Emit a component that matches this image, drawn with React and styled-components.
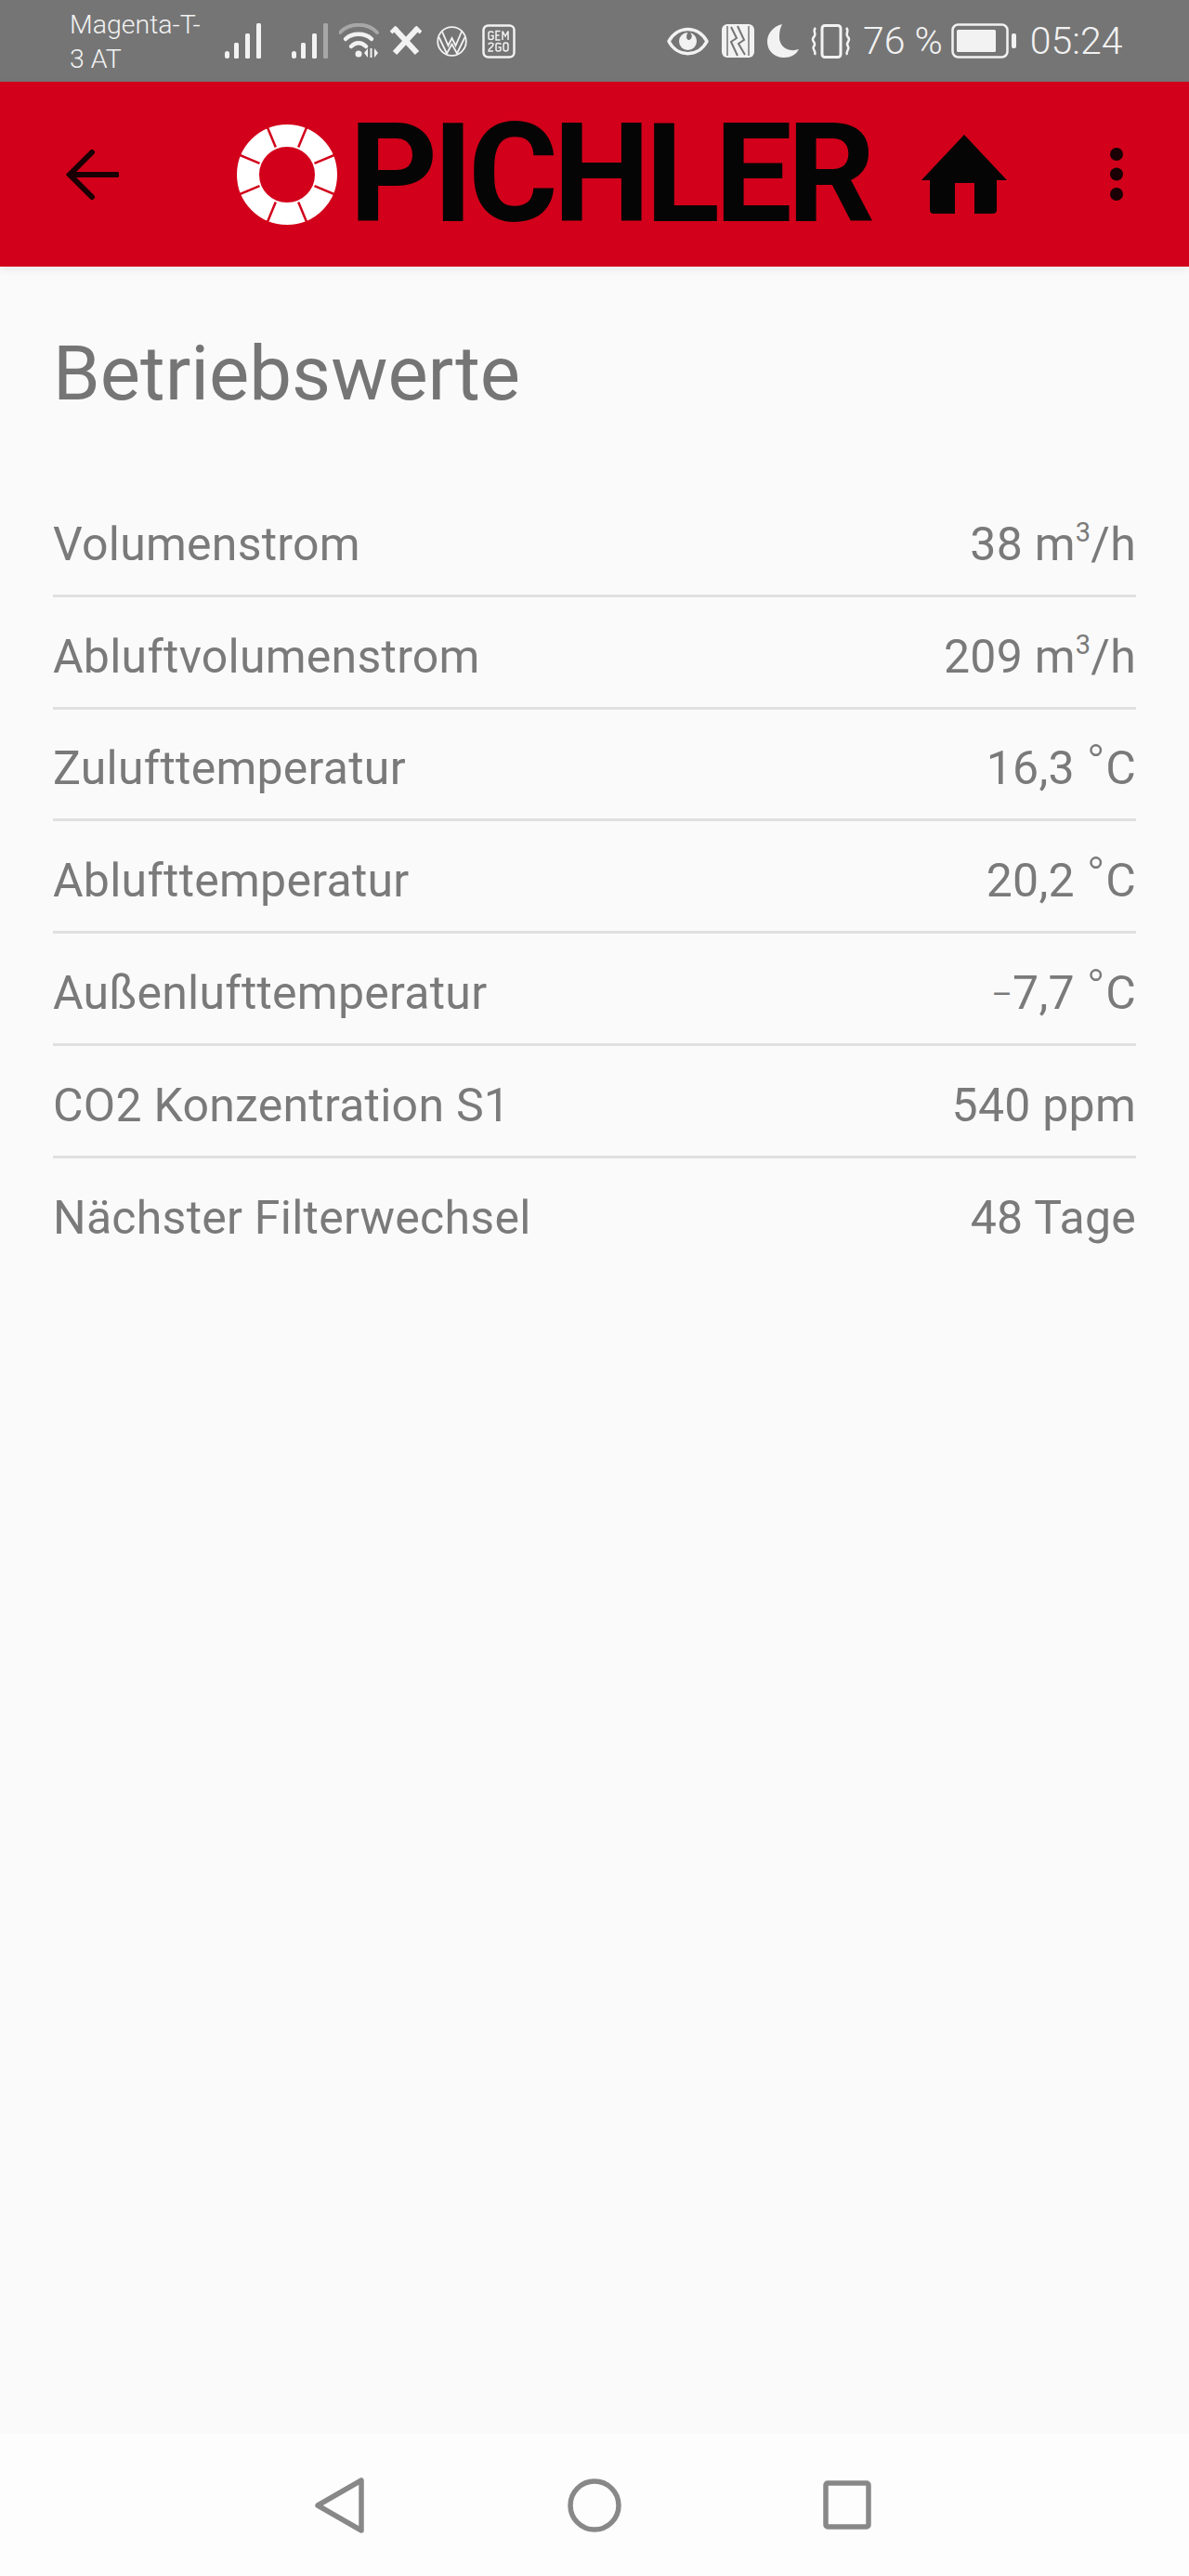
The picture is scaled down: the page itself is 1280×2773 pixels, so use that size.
import styled, { createGlobalStyle } from "styled-components";

const GlobalStyle = createGlobalStyle`
  html, body {
    margin: 0;
    padding: 0;
    background: #fafafa;
  }
  * { box-sizing: border-box; }
`;

const Screen = styled.div`
  width: 1280px;
  height: 2773px;
  display: flex;
  flex-direction: column;
  overflow: hidden;
  font-family: "Roboto", "Liberation Sans", sans-serif;
  background: #fafafa;
`;

const StatusBar = styled.div`
  height: 88px;
  flex: none;
  background: #757575;
  color: #f2f2f2;
  display: flex;
  align-items: center;
  padding-left: 75px;
`;

const Carrier = styled.div`
  width: 167px;
  font-size: 28.5px;
  line-height: 37px;
  font-weight: 300;
  white-space: pre-line;
  margin-top: 2px;
`;

const StatusIcon = styled.svg`
  flex: none;
  display: block;
  margin-left: ${(p) => p.$gap || 0}px;
  color: #f2f2f2;
`;

const StatusText = styled.span`
  font-size: 41px;
  font-weight: 300;
  line-height: 88px;
  flex: none;
  margin-left: ${(p) => p.$gap || 0}px;
`;

const Header = styled.header`
  height: 199px;
  flex: none;
  background: #d2001a;
  display: flex;
  align-items: center;
  padding-left: 71px;
  box-shadow: 0 3px 8px rgba(0, 0, 0, 0.08);
  position: relative;
`;

const HeaderIcon = styled.svg`
  flex: none;
  display: block;
  margin-left: ${(p) => p.$gap || 0}px;
`;

const LogoText = styled.span`
  flex: none;
  width: 563px;
  margin-left: 13px;
  font-size: 148px;
  line-height: 199px;
  font-weight: 700;
  color: #050505;
  letter-spacing: -5.3px;
  white-space: nowrap;
`;

const Content = styled.main`
  flex: 1;
  padding: 0 57px;
`;

const Title = styled.h1`
  margin: 0;
  padding-top: 72px;
  font-size: 81.5px;
  line-height: 86px;
  font-weight: 400;
  color: #757575;
`;

const ValueList = styled.div`
  margin-top: 77px;
  width: 1166px;
`;

const ValueRow = styled.div`
  height: 120.8px;
  padding-top: 10px;
  display: flex;
  justify-content: space-between;
  align-items: center;
  font-size: 50px;
  font-weight: 400;
  letter-spacing: 0.25px;
  color: #7a7a7a;
  border-bottom: 3px solid ${(p) => (p.$last ? "transparent" : "#e0e0e0")};
`;

const Raised = styled.span`
  font-size: ${(p) => p.$size}px;
  line-height: 0;
  vertical-align: ${(p) => p.$lift}px;
  font-weight: ${(p) => p.$weight || 300};
`;

const NavBar = styled.nav`
  height: 153px;
  flex: none;
  background: #fdfdfd;
  display: flex;
  align-items: center;
  padding-left: 339px;
`;

const NavIcon = styled.svg`
  flex: none;
  display: block;
  margin-left: ${(p) => p.$gap || 0}px;
`;

const cube = <Raised $size={29} $lift={20} $weight={400}>3</Raised>;
const degree = <Raised $size={54} $lift={4}>°</Raised>;
const minus = <Raised $size={34} $lift={4} $weight={400}>–</Raised>;

const rows = [
  ["Volumenstrom", <>38 m{cube}/h</>],
  ["Abluftvolumenstrom", <>209 m{cube}/h</>],
  ["Zulufttemperatur", <>16,3 {degree}C</>],
  ["Ablufttemperatur", <>20,2 {degree}C</>],
  ["Außenlufttemperatur", <>{minus}7,7 {degree}C</>],
  ["CO2 Konzentration S1", "540 ppm"],
  ["Nächster Filterwechsel", "48 Tage"],
];

const Signal = ({ gap, dim }) => (
  <StatusIcon $gap={gap} width="39" height="38" viewBox="0 0 39 38" fill="currentColor">
    <rect x="0" y="30" width="5" height="8" rx="2.5" />
    <rect x="10" y="21" width="5" height="17" rx="1.5" />
    <rect x="22" y="11" width="5" height="27" rx="1.5" />
    <rect x="34" y="0" width="5" height="38" rx="1.5" opacity={dim ? 0.4 : 1} />
  </StatusIcon>
);

const Wifi = ({ gap }) => (
  <StatusIcon $gap={gap} width="44" height="38" viewBox="0 0 44 38" fill="none" stroke="currentColor" strokeLinecap="round">
    <path d="M1 10C11 -1 31 -1 41 10" strokeWidth="4" opacity="0.4" />
    <path d="M7 17C14 10 28 10 35 17" strokeWidth="4.5" />
    <path d="M13 25C18 20 24 20 29 25" strokeWidth="4.5" />
    <circle cx="21" cy="33" r="3.5" fill="currentColor" stroke="none" />
    <path d="M31 27l-4 5 4 5zM38 27l4 5-4 5z" fill="currentColor" stroke="none" />
    <path d="M34.500 27v10" strokeWidth="2" strokeLinecap="butt" />
  </StatusIcon>
);

const ToolsX = ({ gap }) => (
  <StatusIcon $gap={gap} width="34" height="32" viewBox="0 0 34 32" fill="none" stroke="currentColor" strokeWidth="6">
    <path d="M5 3L29 29M29 3L5 29" />
    <path d="M1 7L7 1M27 1L33 7" strokeWidth="4" />
  </StatusIcon>
);

const VwLogo = ({ gap }) => (
  <StatusIcon $gap={gap} width="33" height="33" viewBox="0 0 33 33" fill="none" stroke="currentColor" strokeWidth="1.800">
    <circle cx="16.500" cy="16.500" r="15.300" />
    <path d="M6 6L12.500 21L16.500 13L20.500 21L27 6M2.500 12L11 29.500L16.500 19.500L22 29.500L30.500 12" />
  </StatusIcon>
);

const AppBadge = ({ gap }) => (
  <StatusIcon $gap={gap} width="36" height="37" viewBox="0 0 36 37" fill="none" stroke="currentColor">
    <rect x="1.500" y="1.500" width="33" height="34" rx="5" strokeWidth="2.500" />
    <g strokeWidth="1.500">
      <path d="M12 9.500C12 7.500 7 7.500 7 9.500V15C7 17 12 17 12 15V12.500H9.500" />
      <path d="M19.500 7.500H15V17H19.500M15 12H18.500" />
      <path d="M22 17V7.500L25 13L28 7.500V17" />
      <path d="M7 22C7 19.500 12 19.500 12 22C12 24.500 7 26 7 29H12" />
      <path d="M20 22C20 20 15 20 15 22V27.500C15 29.500 20 29.500 20 27.500V25H17.500" />
      <rect x="23" y="20" width="5" height="9" rx="2.500" />
    </g>
  </StatusIcon>
);

const Eye = ({ gap }) => (
  <StatusIcon $gap={gap} width="45" height="31" viewBox="0 0 45 31" fill="none" stroke="currentColor" strokeWidth="3.500">
    <path d="M2 15.500C11 -2 34 -2 43 15.500C34 33 11 33 2 15.500Z" strokeLinejoin="round" />
    <path d="M22.500 6A9.500 9.500 0 1 0 32 15.500C32 11 29 7 25 6.500C28 9 27 13 24 14C21 14.500 20 10 22.500 6Z" fill="currentColor" stroke="none" />
  </StatusIcon>
);

const Nfc = ({ gap }) => (
  <StatusIcon $gap={gap} width="35" height="36" viewBox="0 0 35 36">
    <rect width="35" height="36" rx="6" fill="currentColor" />
    <path d="M6 2V34M29 2V34" fill="none" stroke="#757575" strokeWidth="1.500" />
    <path d="M10 3L16 15L10 19L17 34M17 2L24 17L18 21L25 33" fill="none" stroke="#757575" strokeWidth="2" />
  </StatusIcon>
);

const Moon = ({ gap }) => (
  <StatusIcon $gap={gap} width="34" height="36" viewBox="0 0 34 36" fill="currentColor">
    <path d="M16 0C5 3 0 11 0 19C0 29 8 36 18 36C25 36 31 33 34 27C22 31 13 24 13 14C13 8 14 4 16 0Z" />
  </StatusIcon>
);

const Vibrate = ({ gap }) => (
  <StatusIcon $gap={gap} width="45" height="37" viewBox="0 0 45 37" fill="none" stroke="currentColor" strokeWidth="2.500">
    <rect x="12" y="1.500" width="20" height="34" rx="3" strokeWidth="3" />
    <path d="M5 4C1 8 7 10 3 14C-1 18 7 20 3 24C1 27 6 29 4 33" />
    <path d="M38 4C42 8 36 10 40 14C44 18 36 20 40 24C42 27 37 29 39 33" />
  </StatusIcon>
);

const Battery = ({ gap }) => (
  <StatusIcon $gap={gap} width="70" height="38" viewBox="0 0 70 38" fill="currentColor">
    <rect x="1.500" y="1.500" width="59" height="35" rx="6" fill="none" stroke="currentColor" strokeWidth="2.500" />
    <rect x="6" y="7" width="42" height="24" rx="1.500" />
    <rect x="65" y="11" width="5" height="16" rx="2" />
  </StatusIcon>
);

const Lifebuoy = () => (
  <HeaderIcon $gap={127} width="108" height="108" viewBox="0 0 108 108" fill="none">
    <circle cx="54" cy="54" r="42" stroke="#fff" strokeWidth="24" />
    <g stroke="#d2001a" strokeWidth="2.500">
      <path d="M29.100 -6.100L41.800 24.500" />
      <path d="M78.900 -6.100L66.200 24.500" />
      <path d="M-6.100 29.100L24.500 41.800" />
      <path d="M114.100 29.100L83.500 41.800" />
      <path d="M-6.100 78.900L24.500 66.200" />
      <path d="M114.100 78.900L83.500 66.200" />
      <path d="M29.100 114.100L41.800 83.500" />
      <path d="M78.900 114.100L66.200 83.500" />
    </g>
  </HeaderIcon>
);

export default function App() {
  return (
    <Screen>
      <GlobalStyle />
      <StatusBar>
        <Carrier>{"Magenta-T-\n3 AT"}</Carrier>
        <Signal />
        <Signal gap={33} dim />
        <Wifi gap={12} />
        <ToolsX gap={11} />
        <VwLogo gap={16} />
        <AppBadge gap={16} />
        <Eye gap={163} />
        <Nfc gap={14} />
        <Moon gap={14} />
        <Vibrate gap={13} />
        <StatusText $gap={11}>76 %</StatusText>
        <Battery gap={9} />
        <StatusText $gap={15}>05:24</StatusText>
      </StatusBar>

      <Header>
        <HeaderIcon width="57" height="54" viewBox="0 0 57 54" fill="none" stroke="#1a0004" strokeWidth="6" strokeLinecap="round" strokeLinejoin="miter">
          <path d="M28 3L4 27L28 51M4 27H55" />
        </HeaderIcon>
        <Lifebuoy />
        <LogoText>PICHLER</LogoText>
        <HeaderIcon $gap={53} width="92" height="85" viewBox="0 0 92 85" fill="#050505">
          <path d="M46 0L92 49H81V81C81 83.500 79 85 77 85H57V52H36V85H13C11 85 9 83.500 9 81V49H0Z" />
        </HeaderIcon>
        <HeaderIcon $gap={111} width="14" height="57" viewBox="0 0 14 57" fill="#1a0004">
          <ellipse cx="7" cy="7" rx="7" ry="7" />
          <ellipse cx="7" cy="28.500" rx="7" ry="7" />
          <ellipse cx="7" cy="50" rx="7" ry="7" />
        </HeaderIcon>
      </Header>

      <Content>
        <Title>Betriebswerte</Title>
        <ValueList>
          {rows.map(([label, value], i) => (
            <ValueRow key={label} $last={i === rows.length - 1}>
              <span>{label}</span>
              <span>{value}</span>
            </ValueRow>
          ))}
        </ValueList>
      </Content>

      <NavBar>
        <NavIcon width="54" height="60" viewBox="0 0 54 60" fill="none" stroke="#888" strokeWidth="5.500" strokeLinejoin="round">
          <path d="M50 3V57L3 30Z" />
        </NavIcon>
        <NavIcon $gap={218} width="58" height="58" viewBox="0 0 58 58" fill="none" stroke="#888" strokeWidth="5.500">
          <circle cx="29" cy="29" r="26" />
        </NavIcon>
        <NavIcon $gap={217} width="52" height="53" viewBox="0 0 52 53" fill="none" stroke="#888" strokeWidth="5.500">
          <rect x="3" y="3" width="46" height="47" rx="2" />
        </NavIcon>
      </NavBar>
    </Screen>
  );
}
